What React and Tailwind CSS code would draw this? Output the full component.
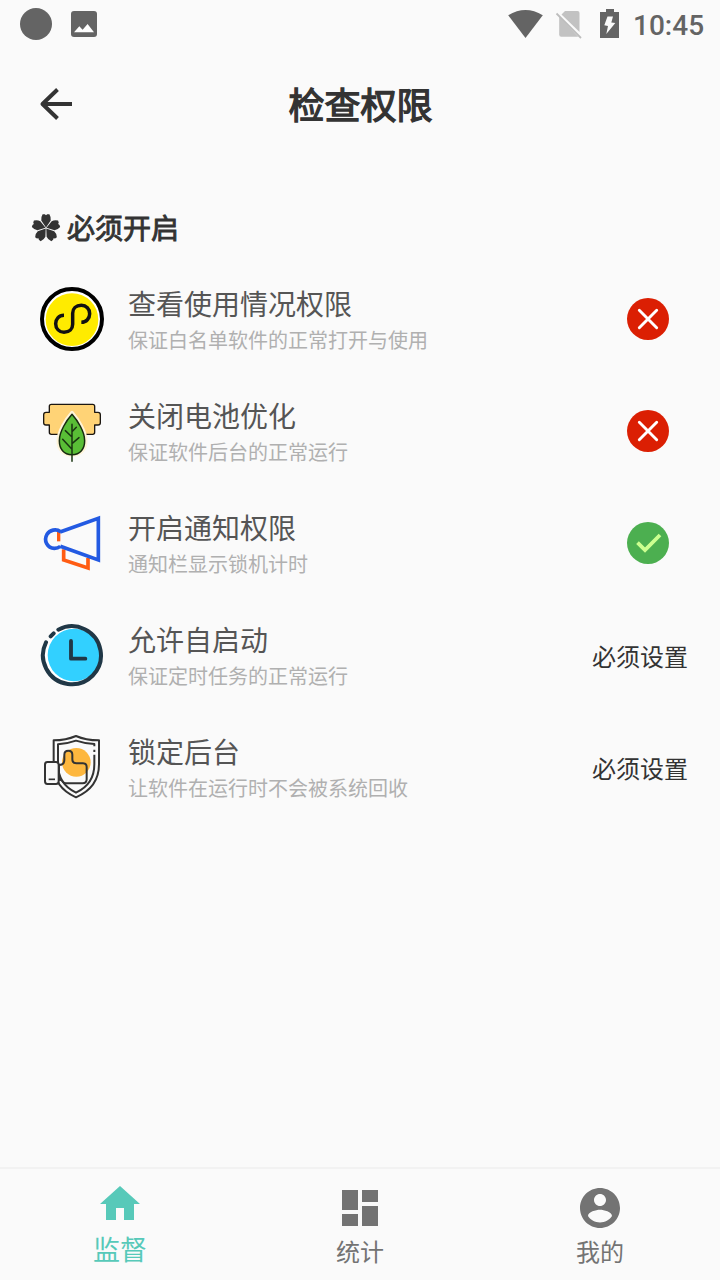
import React from "react";

function StatusBar() {
  return (
    <div className="flex h-12 items-center justify-between pl-5 pr-4 text-[#646464]">
      <div className="flex items-center gap-[19px]">
        <svg className="size-8" viewBox="0 0 32 32" fill="currentColor">
          <circle cx="16" cy="16" r="16" />
        </svg>
        <svg className="h-[26px] w-[26px]" viewBox="0 0 26 26">
          <rect width="26" height="26" rx="3" fill="currentColor" />
          <path d="M3 21.3 8.3 15.2 11.6 18.8 16.6 13 23 21.3Z" fill="#fff" />
        </svg>
      </div>
      <div className="flex items-center">
        <svg className="h-8 w-[35px]" viewBox="0 0 35 32" fill="currentColor">
          <path d="M0.2 7.2Q17.500-3.400 34.800 7.200L17.500 30Z" />
        </svg>
        <svg className="ml-3 h-8 w-[27px]" viewBox="0 0 27 32">
          <path d="M10 3H22.500a2 2 0 0 1 2 2V24L6.500 6.500Z" fill="#c2c2c2" />
          <path d="M4.200 8.500 23.200 28.700H6.200a2 2 0 0 1-2-2Z" fill="#c2c2c2" />
          <path d="M1.500 5.500 26 30" stroke="#bdbdbd" strokeWidth="1.800" />
        </svg>
        <svg className="ml-[18px] h-8 w-5" viewBox="0 0 20 32">
          <path d="M6 1h8v3h5v26H0V4h6Z" fill="currentColor" />
          <path d="M7.500 8.500H13L11.300 14.600 15.300 15 6.300 26 8 18 4.300 17.300Z" fill="#fafafa" />
        </svg>
        <span className="ml-[13px] w-[71px] whitespace-nowrap pt-[3px] font-[Roboto] text-[28px] font-medium leading-8">10:45</span>
      </div>
    </div>
  );
}

function UsageIcon() {
  return (
    <svg className="size-16 shrink-0" viewBox="30 36 192 192" fill="none">
      <circle cx="126" cy="132" r="90" fill="#fff" stroke="#000" strokeWidth="12" />
      <circle cx="126" cy="134" r="79" fill="#ffeb00" />
      <path d="M102 121c-16 0-25 12-25 25 0 15 11 26 25 26 16 0 26-10 26-24V115c0-14 10-24 26-24 15 0 25 11 25 25s-10 26-25 26" stroke="#111" strokeWidth="10.500" />
    </svg>
  );
}

function BatteryIcon() {
  return (
    <svg className="size-16 shrink-0" viewBox="30 27 192 192" fill="none" strokeLinecap="round" strokeLinejoin="round">
      <path d="M64 43H188q6 0 6 6V67h10q7 0 7 7V98q0 7-7 7H194v22q0 6-6 6H64q-6 0-6-6V105H48q-7 0-7-7V74q0-7 7-7H58V49q0-6 6-6Z" fill="#ffd376" stroke="#1c1711" strokeWidth="4" />
      <path d="M126 68C110 86 85 123 85 152c0 24 14 43 41 43s41-19 41-43c0-29-25-66-41-84Z" fill="#5abb3b" stroke="#fff4d9" strokeWidth="11" />
      <path d="M126 73C110 91 88 124 88 152c0 24 13 42 38 42s38-18 38-42c0-28-22-61-38-79Z" fill="#59be36" stroke="#172b10" strokeWidth="4.500" />
      <path d="M126 103V214M106 122 126 141M139 112 126 125M98 148 126 178M147 143 126 161" stroke="#193511" strokeWidth="4.500" />
    </svg>
  );
}

function MegaphoneIcon() {
  return (
    <svg className="size-16 shrink-0" viewBox="30 33 192 192" fill="none">
      <path d="M101 148V180L174 204V174" stroke="#ff5c13" strokeWidth="11" />
      <path d="M86 95v29" stroke="#ff5c13" strokeWidth="10" />
      <path d="M90 96 205 55V180L91 139M92 95C78 85 59 90 51 103 40 122 52 145 73 145c8 0 13-2 18-6" stroke="#235ae2" strokeWidth="11" />
    </svg>
  );
}

function ClockIcon() {
  return (
    <svg className="size-16 shrink-0" viewBox="29 40 192 192" fill="none" strokeLinecap="round">
      <circle cx="127" cy="135" r="84" fill="#fff" />
      <circle cx="131" cy="136" r="79" fill="#32d0ff" />
      <path d="M84 60A87 87 0 1 1 47 98M61 80 70 71" stroke="#203746" strokeWidth="12" />
      <path d="M122 94V147H165" stroke="#203746" strokeWidth="11.500" strokeLinejoin="round" />
    </svg>
  );
}

function LockIcon() {
  return (
    <svg className="size-16 shrink-0" viewBox="30 39 192 192" fill="none" strokeLinejoin="round">
      <path d="M138 42C117 51 95 55 71 55V127C71 176 96 208 138 226c42-18 69-50 69-99V55c-24 0-49-4-69-13Z" fill="#fafafa" stroke="#333" strokeWidth="6" />
      <path d="M193 73V66C174 65 155 62 138 56 121 62 103 66 84 67V127C84 170 104 196 138 212c35-16 55-42 55-85V98M193 83v7" stroke="#333" strokeWidth="6" />
      <circle cx="139" cy="121" r="43" fill="#fdb73e" />
      <path d="M87 129C98 129 103 124 103 114V98q0-12 12-12 12 0 12 12v14q0 12 12 12h20q11 0 11 11v37q0 12-12 12H108q-7 0-10-6-3-5-11-5Z" fill="none" stroke="#333" strokeWidth="6" />
      <path d="M52 120H78q8 0 8 8V178q0 8-8 8H52q-7 0-7-8V128q0-8 7-8Z" fill="#fafafa" stroke="#333" strokeWidth="6" />
      <path d="M56 172H75" stroke="#333" strokeWidth="5" />
    </svg>
  );
}

function Status({ kind }) {
  if (kind === "required") {
    return <span className="pt-0.5 text-2xl text-[#333]">必须设置</span>;
  }
  if (kind === "granted") {
    return (
      <svg className="mr-[19px] size-[42px]" viewBox="0 0 42 42" fill="none">
        <circle cx="21" cy="21" r="21" fill="#4caf50" />
        <path d="M10.500 20.700 18 28 33 13" stroke="#ccff90" strokeWidth="3.800" />
      </svg>
    );
  }
  return (
    <svg className="mr-[19px] size-[42px]" viewBox="0 0 42 42" fill="none">
      <circle cx="21" cy="21" r="21" fill="#db1f03" />
      <path d="M12.300 12.300 29.700 29.700M29.700 12.300 12.300 29.700" stroke="#fff" strokeWidth="2.900" strokeLinecap="round" />
    </svg>
  );
}

const permissions = [
  { Icon: UsageIcon, title: "查看使用情况权限", note: "保证白名单软件的正常打开与使用", status: "denied" },
  { Icon: BatteryIcon, title: "关闭电池优化", note: "保证软件后台的正常运行", status: "denied" },
  { Icon: MegaphoneIcon, title: "开启通知权限", note: "通知栏显示锁机计时", status: "granted" },
  { Icon: ClockIcon, title: "允许自启动", note: "保证定时任务的正常运行", status: "required" },
  { Icon: LockIcon, title: "锁定后台", note: "让软件在运行时不会被系统回收", status: "required" },
];

function PermissionRow({ Icon, title, note, status }) {
  return (
    <li className="flex h-28 items-center pl-10 pr-8">
      <Icon />
      <div className="ml-6 flex-1">
        <div className="text-[28px] leading-[41px] text-[#555]">{title}</div>
        <div className="text-xl leading-8 text-[#b0b0b0]">{note}</div>
      </div>
      <Status kind={status} />
    </li>
  );
}

function Clover() {
  return (
    <svg className="h-[30px] w-[30px]" viewBox="0 0 30 30" fill="#333">
      {[0, 72, 144, 216, 288].map((a) => (
        <path key={a} d="M15 14.500 10.300 7.500Q9.600 4.500 11.600 1.200L13.800 1.200 15 2.200 16.200 1.200 18.400 1.200Q20.400 4.500 19.700 7.500Z" transform={`rotate(${a} 15 15)`} />
      ))}
    </svg>
  );
}

function BottomNav() {
  return (
    <nav className="grid h-[113px] grid-cols-3 border-t-2 border-[#f2f2f2] text-center text-[#737373]">
      <a className="flex flex-col items-center pt-[11px] text-[#57c9b9]">
        <svg className="size-12" viewBox="0 0 24 24" fill="currentColor">
          <path d="M10 20v-6h4v6h5v-8h3L12 3 2 12h3v8z" />
        </svg>
        <span className="mt-[3px] text-[27px] leading-9">监督</span>
      </a>
      <a className="flex flex-col items-center pt-[15px]">
        <svg className="size-12" viewBox="0 0 24 24" fill="currentColor">
          <path d="M3 13h8V3H3v10zm0 8h8v-6H3v6zm10 0h8V11h-8v10zm0-18v6h8V3h-8z" />
        </svg>
        <span className="mt-[3px] text-2xl">统计</span>
      </a>
      <a className="flex flex-col items-center pt-[15px]">
        <svg className="size-12" viewBox="0 0 24 24" fill="currentColor">
          <path d="M12 2C6.480 2 2 6.480 2 12s4.480 10 10 10 10-4.480 10-10S17.520 2 12 2zm0 3c1.660 0 3 1.340 3 3s-1.340 3-3 3-3-1.340-3-3 1.340-3 3-3zm0 14.200c-2.500 0-4.710-1.280-6-3.220.030-1.990 4-3.080 6-3.080 1.990 0 5.970 1.090 6 3.080-1.290 1.940-3.500 3.220-6 3.220z" />
        </svg>
        <span className="mt-[3px] text-2xl">我的</span>
      </a>
    </nav>
  );
}

export default function App() {
  return (
    <div className="flex h-[1280px] w-[720px] flex-col overflow-hidden bg-[#fafafa] font-['Noto_Sans_CJK_SC',sans-serif] text-[#333]">
      <StatusBar />
      <header className="grid h-28 grid-cols-[104px_1fr_104px] items-center">
        <svg className="ml-8 size-12" viewBox="0 0 48 48" fill="none" stroke="#333" strokeWidth="4">
          <path d="M25.500 9.500 10.500 24 25.500 38.500" strokeLinejoin="round" />
          <path d="M11 24H40" />
        </svg>
        <h1 className="pb-0.5 pl-px text-center text-4xl font-normal [-webkit-text-stroke:1.3px_#333]">检查权限</h1>
      </header>
      <main className="flex-1">
        <h2 className="flex h-[103px] items-center gap-1.5 pl-[31px] pt-[33px] text-[28px] font-normal">
          <Clover />
          <span className="pb-0.5 [-webkit-text-stroke:0.9px_#333]">必须开启</span>
        </h2>
        <ul>
          {permissions.map((p) => (
            <PermissionRow key={p.title} {...p} />
          ))}
        </ul>
      </main>
      <BottomNav />
    </div>
  );
}
